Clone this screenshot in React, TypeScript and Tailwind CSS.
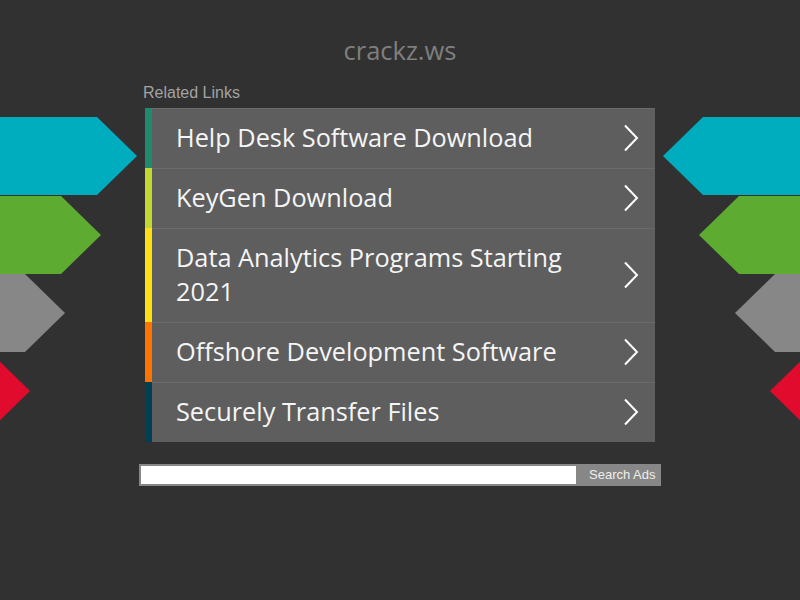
const links = [
	{ text: 'Help Desk Software Download', bar: 'bg-[#1f8a6d]' },
	{ text: 'KeyGen Download', bar: 'bg-[#c1d831]' },
	{ text: 'Data Analytics Programs Starting 2021', bar: 'bg-[#ffde15]' },
	{ text: 'Offshore Development Software', bar: 'bg-[#ff7300]' },
	{ text: 'Securely Transfer Files', bar: 'bg-[#013f55]' },
];

const leftArrows = [
	{ top: 117, tip: 137, color: '#00adbe' },
	{ top: 196, tip: 101, color: '#5dab30' },
	{ top: 274, tip: 65, color: '#878787' },
	{ top: 352, tip: 30, color: '#e00b2d' },
];

const rightArrows = [
	{ top: 117, tip: 663, color: '#00adbe' },
	{ top: 196, tip: 699, color: '#5dab30' },
	{ top: 274, tip: 735, color: '#878787' },
	{ top: 352, tip: 770, color: '#e00b2d' },
];

const Decorations = () => (
	<svg className="absolute inset-0 pointer-events-none" width="800" height="600">
		{leftArrows.map((a) => (
			<polygon
				key={'l' + a.top}
				fill={a.color}
				points={`0,${a.top} ${a.tip - 40},${a.top} ${a.tip},${a.top + 39} ${a.tip - 40},${a.top + 78} 0,${a.top + 78}`}
			/>
		))}
		{rightArrows.map((a) => (
			<polygon
				key={'r' + a.top}
				fill={a.color}
				points={`800,${a.top} ${a.tip + 40},${a.top} ${a.tip},${a.top + 39} ${a.tip + 40},${a.top + 78} 800,${a.top + 78}`}
			/>
		))}
	</svg>
);

const Chevron = () => (
	<svg width="16" height="28" viewBox="0 0 16 28" className="shrink-0 mt-[1px]">
		<polyline points="2,1.5 14,14 2,26.5" fill="none" stroke="#ffffff" strokeWidth="2" />
	</svg>
);

const App = () => {
	return (
		<div className="relative w-[800px] h-[600px] overflow-hidden bg-[#313131] flex flex-col items-center">
			<Decorations />

			<h1 className="relative mt-[34px] h-[32px] leading-[32px] text-[25.5px] text-[#7f7f7f] font-['Open_Sans',sans-serif]">
				crackz.ws
			</h1>

			<div className="relative mt-[17px] w-[514px] text-[16px] leading-[20px] text-[#a3a3a3] font-['Liberation_Sans',sans-serif]">
				Related Links
			</div>

			<div className="relative mt-[5px] w-[510px] flex flex-col">
				{links.map((link) => (
					<a key={link.text} href="#" className="flex bg-[#5e5e5e]">
						<div className={`${link.bar} w-[7px] shrink-0`} />
						<div className="flex-1 flex items-center pl-[24px] pr-[16px] pt-[11px] pb-[14px] border-t border-[#6b6b6b]">
							<span className="flex-1 pr-[40px] text-[25.3px] leading-[34px] text-[#f5f5f5] font-['Open_Sans',sans-serif]">
								{link.text}
							</span>
							<Chevron />
						</div>
					</a>
				))}
			</div>

			<div className="relative mt-[22px] w-[522px] h-[22px] flex bg-[#878787]">
				<input className="w-[435px] m-[2px] mr-0 bg-white outline-none" type="text" />
				<button className="flex-1 pl-[13px] text-left text-[13px] text-[#eeeeee] font-['Liberation_Sans',sans-serif]">
					Search Ads
				</button>
			</div>
		</div>
	);
};

export default App;
